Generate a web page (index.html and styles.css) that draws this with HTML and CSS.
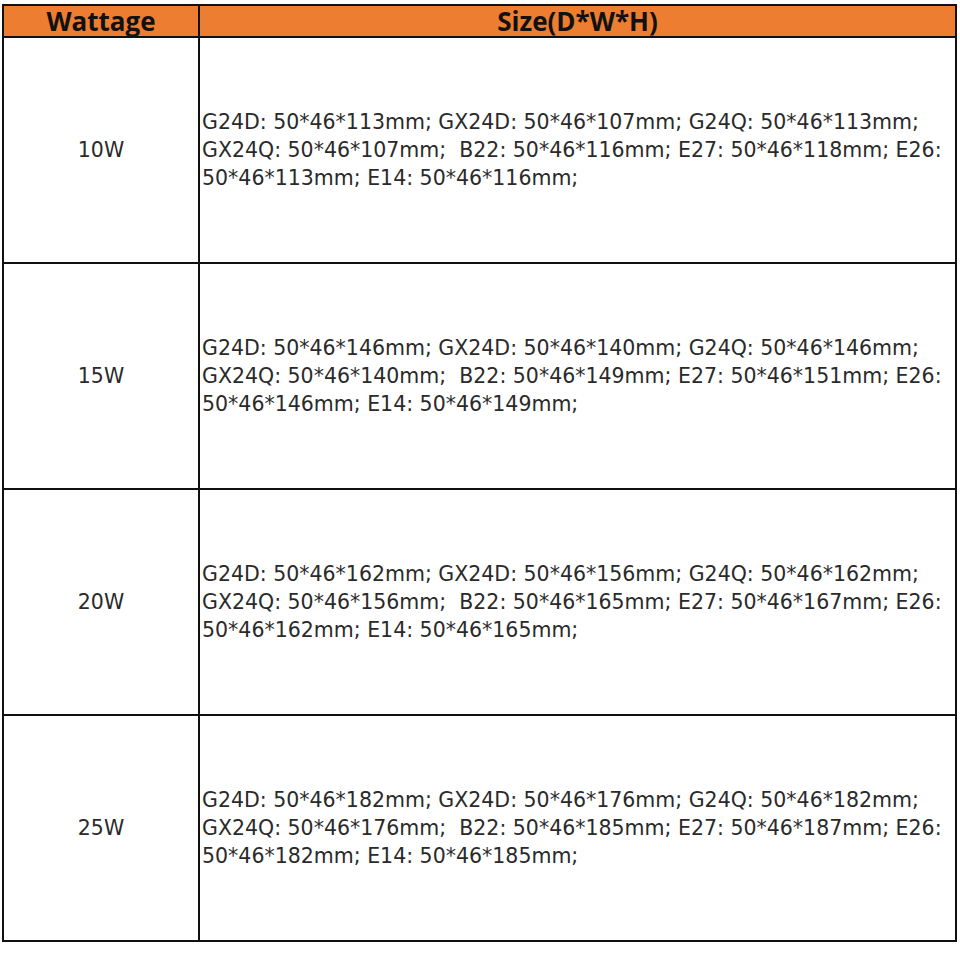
FILE: index.html
```html
<!DOCTYPE html>
<html>
<head>
<meta charset="utf-8">
<link rel="stylesheet" href="styles.css">
</head>
<body>
<table class="spec">
  <thead>
    <tr><th class="c-watt">Wattage</th><th class="c-size">Size(D*W*H)</th></tr>
  </thead>
  <tbody>
    <tr>
      <td class="watt">10W</td>
      <td class="size">G24D: 50*46*113mm; GX24D: 50*46*107mm; G24Q: 50*46*113mm;<br>GX24Q: 50*46*107mm;&nbsp; B22: 50*46*116mm; E27: 50*46*118mm; E26:<br>50*46*113mm; E14: 50*46*116mm;</td>
    </tr>
    <tr>
      <td class="watt">15W</td>
      <td class="size">G24D: 50*46*146mm; GX24D: 50*46*140mm; G24Q: 50*46*146mm;<br>GX24Q: 50*46*140mm;&nbsp; B22: 50*46*149mm; E27: 50*46*151mm; E26:<br>50*46*146mm; E14: 50*46*149mm;</td>
    </tr>
    <tr>
      <td class="watt">20W</td>
      <td class="size">G24D: 50*46*162mm; GX24D: 50*46*156mm; G24Q: 50*46*162mm;<br>GX24Q: 50*46*156mm;&nbsp; B22: 50*46*165mm; E27: 50*46*167mm; E26:<br>50*46*162mm; E14: 50*46*165mm;</td>
    </tr>
    <tr>
      <td class="watt">25W</td>
      <td class="size">G24D: 50*46*182mm; GX24D: 50*46*176mm; G24Q: 50*46*182mm;<br>GX24Q: 50*46*176mm;&nbsp; B22: 50*46*185mm; E27: 50*46*187mm; E26:<br>50*46*182mm; E14: 50*46*185mm;</td>
    </tr>
  </tbody>
</table>
</body>
</html>
```
FILE: styles.css
```css
html, body {
  margin: 0;
  padding: 0;
  background: #ffffff;
}
body {
  padding: 4px 0 0 2px;
  font-family: "DejaVu Sans", "Liberation Sans", sans-serif;
  color: #2a2a2a;
}
.spec {
  border-collapse: collapse;
  width: 955px;
  table-layout: fixed;
}
.spec th, .spec td {
  border: 2px solid #111;
  padding: 0;
}
.spec th {
  background: #ed7d31;
  color: #111;
  font-family: "Open Sans", "Liberation Sans", sans-serif;
  font-weight: 700;
  font-size: 26px;
  height: 30px;
  line-height: 30px;
  text-align: center;
}
.c-watt {
  width: 194px;
}
.spec td {
  height: 224px;
  vertical-align: middle;
}
.watt {
  text-align: center;
  font-size: 20.5px;
}
.size {
  font-size: 20.5px;
  line-height: 28px;
  padding-left: 2px !important;
  white-space: nowrap;
}
```
